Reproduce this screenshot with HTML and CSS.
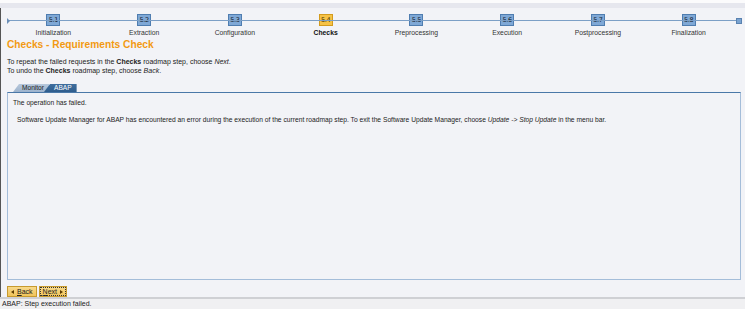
FILE: index.html
```html
<!DOCTYPE html>
<html>
<head>
<meta charset="utf-8">
<link rel="stylesheet" href="styles.css">
</head>
<body>
<div class="topbar"></div>
<div class="page">
  <div class="roadmap">
    <div class="line"></div>
    <div class="start"></div>
    <div class="end"></div>
    <div class="steps">
      <div class="step"><div class="box">5.1</div><div class="label">Initialization</div></div>
      <div class="step"><div class="box">5.2</div><div class="label">Extraction</div></div>
      <div class="step"><div class="box">5.3</div><div class="label">Configuration</div></div>
      <div class="step active"><div class="box">5.4</div><div class="label">Checks</div></div>
      <div class="step"><div class="box">5.5</div><div class="label">Preprocessing</div></div>
      <div class="step"><div class="box">5.6</div><div class="label">Execution</div></div>
      <div class="step"><div class="box">5.7</div><div class="label">Postprocessing</div></div>
      <div class="step"><div class="box">5.8</div><div class="label">Finalization</div></div>
    </div>
  </div>
  <h1 class="title">Checks - Requirements Check</h1>
  <p class="info">To repeat the failed requests in the <b>Checks</b> roadmap step, choose <i>Next</i>.<br>To undo the <b>Checks</b> roadmap step, choose <i>Back</i>.</p>
  <div class="tabs">
    <div class="tab">Monitor</div>
    <div class="tab sel">ABAP</div>
  </div>
  <div class="panel">
    <p class="msg">The operation has failed.</p>
    <p class="msg detail">Software Update Manager for ABAP has encountered an error during the execution of the current roadmap step. To exit the Software Update Manager, choose <i>Update -&gt; Stop Update</i> in the menu bar.</p>
  </div>
  <div class="buttons">
    <div class="btn"><span class="arr left"></span><span><u>B</u>ack</span></div>
    <div class="btn focus"><span><u>N</u>ext</span><span class="arr right"></span></div>
  </div>
</div>
<div class="status">ABAP: Step execution failed.</div>
</body>
</html>
```
FILE: styles.css
```css
html, body {
  margin: 0;
  padding: 0;
  background: #f2f3f7;
  font-family: "Liberation Sans", Arial, sans-serif;
  color: #222;
  width: 745px;
  height: 309px;
  overflow: hidden;
}
.topbar {
  height: 3px;
  background: #fbfbfc;
  border-bottom: 5px solid #e6e7ee;
}
.page {
  border-left: 1px solid #555;
  height: 289px;
  display: flex;
  flex-direction: column;
  padding: 0 4px 0 6px;
}
.roadmap {
  position: relative;
  height: 31px;
  flex: none;
}
.line {
  position: absolute;
  left: 1px;
  right: 1px;
  top: 12px;
  height: 1px;
  background: #7c9fc6;
}
.start {
  position: absolute;
  left: 0;
  top: 10px;
  width: 0;
  height: 0;
  border-top: 3px solid transparent;
  border-bottom: 3px solid transparent;
  border-left: 3px solid #6b8fb8;
}
.end {
  position: absolute;
  right: -1px;
  top: 10px;
  width: 4px;
  height: 4px;
  background: #7aa3d0;
  border: 1px solid #5a82b0;
}
.steps {
  display: grid;
  grid-template-columns: repeat(8, 1fr);
  padding: 6px 7px 0 1px;
}
.step {
  display: flex;
  flex-direction: column;
  align-items: center;
}
.box {
  width: 12px;
  height: 10px;
  background: #7fa8d6;
  border: 1px solid #4f7db0;
  font-family: "DejaVu Sans", sans-serif;
  font-size: 6.5px;
  line-height: 10px;
  letter-spacing: -0.3px;
  text-align: center;
  color: #101828;
  white-space: nowrap;
}
.active .box {
  background: #f6c246;
  border-color: #d39b1e;
  color: #3a2a00;
}
.label {
  margin-top: 3px;
  font-size: 6.8px;
  line-height: 8px;
  color: #333;
  white-space: nowrap;
}
.active .label {
  font-weight: bold;
  color: #111;
}
.title {
  margin: 0;
  font-size: 10.2px;
  font-weight: bold;
  color: #f29a12;
  line-height: 12px;
}
.info {
  margin: 6px 0 0 0;
  font-size: 7px;
  line-height: 9px;
  color: #222;
}
.tabs {
  display: flex;
  margin: 9px 0 0 6px;
  height: 8px;
  flex: none;
}
.tab {
  font-size: 6.6px;
  line-height: 8px;
  padding: 0 5px 0 9px;
  background: linear-gradient(#b7c8dc, #9db3cd);
  color: #222;
  clip-path: polygon(6px 0, 100% 0, 100% 100%, 0 100%);
}
.tab.sel {
  background: linear-gradient(#3f6e9e, #2f5d8d);
  color: #fff;
  margin-left: -5px;
  padding: 0 5px 0 10px;
}
.panel {
  height: 186px;
  flex: none;
  border: 1px solid #a4bdd9;
  border-top: 1px solid #4a78a8;
  background: #f2f3f7;
  padding: 0 5px;
}
.msg {
  margin: 5px 0 0 0;
  font-size: 6.7px;
  line-height: 9px;
}
.detail {
  margin-top: 8px;
  padding-left: 4px;
}
.buttons {
  display: flex;
  gap: 2px;
  margin-top: 6px;
}
.btn {
  display: flex;
  align-items: center;
  gap: 3px;
  height: 9px;
  padding: 0 3px;
  background: linear-gradient(#f8d98a, #f0c45a);
  border: 1px solid #c79a2e;
  font-size: 7px;
  color: #222;
}
.btn.focus {
  outline: 1px dotted #333;
  outline-offset: -2px;
}
.arr {
  width: 0;
  height: 0;
  border-top: 2.5px solid transparent;
  border-bottom: 2.5px solid transparent;
}
.arr.left { border-right: 3px solid #5a3a00; }
.arr.right { border-left: 3px solid #5a3a00; }
.status {
  border-top: 2px solid #cfd0d4;
  background: #f0f0f2;
  font-size: 7px;
  line-height: 10px;
  padding-left: 2px;
  height: 10px;
}
```
